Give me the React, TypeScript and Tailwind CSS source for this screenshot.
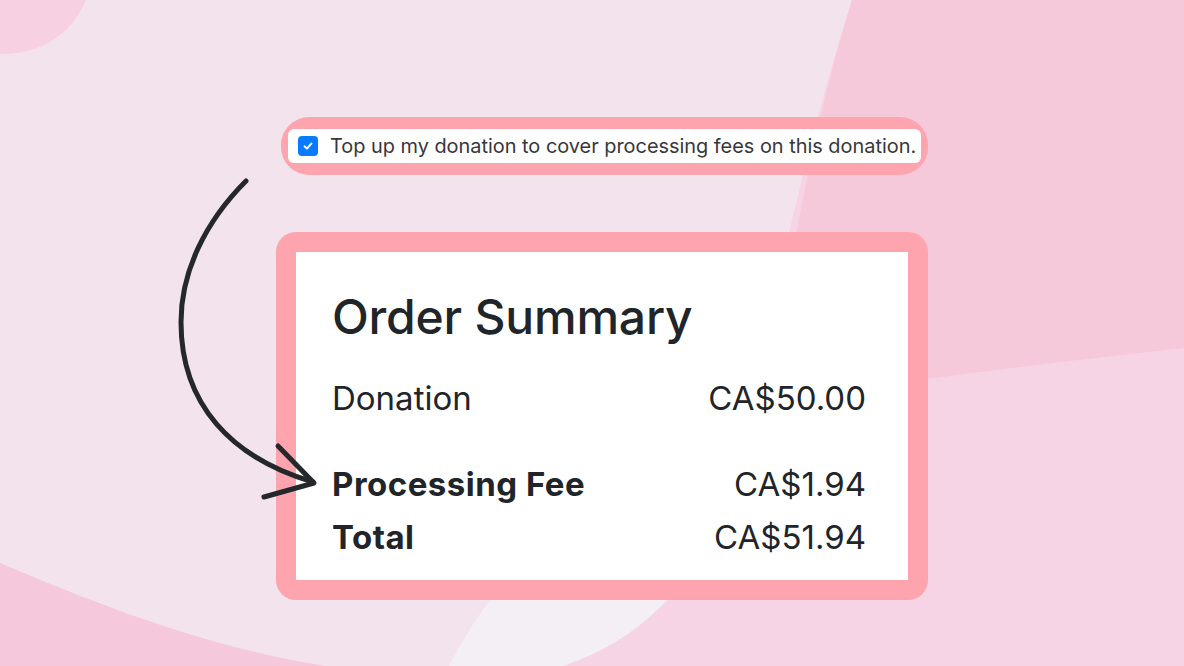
import React from "react";

function Background() {
  return (
    <svg
      className="absolute inset-0"
      width="1184"
      height="666"
      viewBox="0 0 1184 666"
      aria-hidden="true"
    >
      <rect width="1184" height="666" fill="#f3e3ec" />
      {/* top-left blob */}
      <path d="M0,0 L86,0 C72,32 45,54 0,54 Z" fill="#f7d0e1" />
      {/* right light-pink region */}
      <path
        d="M852,0 C800,160 770,330 720,520 C700,580 640,640 560,666 L1184,666 L1184,0 Z"
        fill="#f7d4e5"
      />
      {/* right darker band */}
      <path
        d="M852,0 C812,130 790,260 770,400 C860,388 1000,368 1184,348 L1184,0 Z"
        fill="#f5c8da"
      />
      {/* pale stripe at the bottom */}
      <path
        d="M545,540 L700,540 C685,590 640,640 563,666 L449,666 C470,625 500,580 545,540 Z"
        fill="#f3eff5"
      />
      {/* bottom-left blob */}
      <path d="M0,563 C110,610 220,650 326,666 L0,666 Z" fill="#f5c9db" />
    </svg>
  );
}

function Arrow() {
  return (
    <svg
      className="absolute left-0 top-0 pointer-events-none"
      width="1184"
      height="666"
      viewBox="0 0 1184 666"
      aria-hidden="true"
    >
      <g
        fill="none"
        stroke="#25282b"
        strokeWidth="5"
        strokeLinecap="round"
        strokeLinejoin="round"
      >
        <path d="M246,181 C205,222 181,272 181,322 C181,405 232,458 313,482" />
        <path d="M278,446 L314,483 L264,497" />
      </g>
    </svg>
  );
}

export default function App() {
  return (
    <div
      className="relative w-[1184px] h-[666px] overflow-hidden"
      style={{ fontFamily: "Inter, 'Noto Sans', sans-serif" }}
    >
      <Background />
      <div className="relative flex flex-col pl-[276px] pt-[117px]">
        {/* checkbox pill */}
        <div className="ml-[5px] w-[647px] rounded-[28px] bg-[#fda4af] px-[7px] py-[12px]">
          <label className="flex h-[34px] items-center rounded-[6px] bg-white pl-[10px]">
            <span className="flex h-[20px] w-[20px] shrink-0 items-center justify-center rounded-[4px] bg-[#0a7aff]">
              <svg width="12" height="12" viewBox="0 0 12 12">
                <path
                  d="M2.5,6.3 L5,8.6 L9.5,3.4"
                  fill="none"
                  stroke="white"
                  strokeWidth="1.9"
                  strokeLinecap="round"
                  strokeLinejoin="round"
                />
              </svg>
            </span>
            <span className="ml-[12px] whitespace-nowrap text-[19.9px] leading-[24px] text-[#37373a]">
              Top up my donation to cover processing fees on this donation.
            </span>
          </label>
        </div>

        {/* order summary card */}
        <div className="mt-[57px] w-[652px] rounded-[20px] bg-[#fda4af] p-[20px]">
          <div className="h-[328px] bg-white pl-[36px] pr-[42px] pt-[37px] text-[#212529]">
            <h2 className="text-[48px] leading-[56px] font-medium tracking-[-0.2px]">
              Order Summary
            </h2>
            <div className="mt-[33px] flex justify-between text-[33px] leading-[40px]">
              <span>Donation</span>
              <span>CA$50.00</span>
            </div>
            <div className="mt-[46px] flex justify-between text-[33px] leading-[40px]">
              <span className="font-bold tracking-[0.5px]">Processing Fee</span>
              <span>CA$1.94</span>
            </div>
            <div className="mt-[13px] flex justify-between text-[33px] leading-[40px]">
              <span className="font-bold tracking-[0.5px]">Total</span>
              <span>CA$51.94</span>
            </div>
          </div>
        </div>
      </div>
      <Arrow />
    </div>
  );
}
